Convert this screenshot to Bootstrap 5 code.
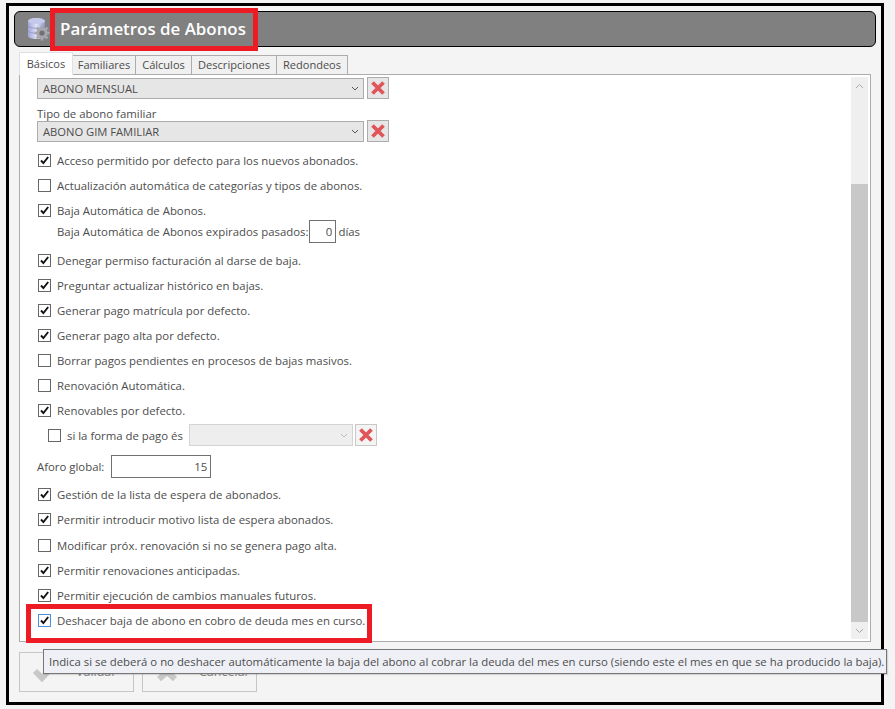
<!DOCTYPE html>
<html lang="es">
<head>
<meta charset="utf-8">
<title>Parámetros de Abonos</title>
<link href="https://cdn.jsdelivr.net/npm/bootstrap@5.3.0/dist/css/bootstrap.min.css" rel="stylesheet">
<style>
html,body{height:100%;overflow:hidden}
body{background:#f4f4f4;color:#4d4d4d;font-family:"Open Sans","Noto Sans",sans-serif;font-size:11.38px;line-height:15px}
.frame{position:relative;margin:3px 11px 0 6px;width:878px;height:702px;border:3px solid #000;padding:5px 5px 0 5px;background:#f4f4f4}
.head-bar{height:36px;width:862px;background:#808080;border:1px solid #000;border-radius:6px;padding-left:12px;gap:10px}
.head-title{color:#fff;font-size:16.9px;font-weight:600;line-height:34px}
.mark-box{position:absolute;border:5px solid #ed1c24;pointer-events:none}
.mark-head{left:41px;top:2px;width:208px;height:43px}
.mark-row{left:17px;top:598px;width:346px;height:39px}
.tab-strip{margin:5px 0 0 5px;height:22px;border:0;align-items:flex-end;position:relative;z-index:1;flex-wrap:nowrap}
.tab-strip .nav-link{height:20px;padding:0;margin:0 0 -1px 0;border:1px solid #acacac;border-left-width:0;border-radius:0;background:#f0f0f0;color:#4d4d4d;text-align:center;line-height:18px;font-size:11.05px}
.tab-strip .nav-link.active{height:23px;background:#fff;border-left-width:1px;border-bottom-color:#fff;line-height:22px;padding-bottom:0;color:#4d4d4d}
.tw1{width:54px}.tw2{width:63px}.tw3{width:56px}.tw4{width:85px}.tw5{width:71px}
.tab-body{margin-left:5px;width:852px;height:568px;border:1px solid #acacac;background:#fff;padding:2px 2px 2px 0;overflow:hidden}
.scroll-pane{overflow:hidden;padding-left:17px;min-width:0}
.clip-label{margin-top:-15px;height:15px;white-space:nowrap}
.combo{width:327px;height:21px;min-height:0;padding:0 20px 0 5px;border:1px solid #acacac;border-radius:0;background-color:#e6e6e6;color:#4d4d4d;font-size:11.2px;line-height:19px;background-position:right 4px center;background-size:8px 5px;background-image:url("data:image/svg+xml,%3Csvg xmlns='http://www.w3.org/2000/svg' viewBox='0 0 8 5'%3E%3Cpath d='M1 1l3 3 3-3' fill='none' stroke='%23555' stroke-width='1'/%3E%3C/svg%3E")}
.combo:disabled{background-color:#eee;border-color:#d4d4d4;width:164px;height:22px;background-image:url("data:image/svg+xml,%3Csvg xmlns='http://www.w3.org/2000/svg' viewBox='0 0 8 5'%3E%3Cpath d='M1 1l3 3 3-3' fill='none' stroke='%23bbb' stroke-width='1'/%3E%3C/svg%3E")}
.del-btn{width:22px;height:22px;padding:0;border:1px solid #acacac;border-radius:0;background:#e6e6e6;line-height:0}
.del-off{background:#f4f4f4;border-color:#c8c8c8;margin-left:-2px}
.pick-pair{gap:3px}
.label-gap{height:21px;line-height:13px}
.opt-line{height:25px;gap:6px;white-space:nowrap}
.opt-line .form-check-input,.sub-pick .form-check-input{width:13px;height:13px;margin:0 0 0 1px;flex:none;border:1px solid #666;border-radius:0;background-color:#fff;box-shadow:none}
.opt-line .form-check-input:checked,.sub-pick .form-check-input:checked{background-color:#fff;border-color:#666;background-size:11px 11px;background-image:url("data:image/svg+xml,%3Csvg xmlns='http://www.w3.org/2000/svg' viewBox='0 0 11 11'%3E%3Cpath d='M2 5.5l2.4 2.6L9.2 2' fill='none' stroke='%23111' stroke-width='1.9'/%3E%3C/svg%3E")}
.opt-line .form-check-input.is-focus{border-color:#4a90e2}
.gap-a{margin-top:6px}
.gap-b{margin-top:1px}
.sub-line{height:23px;padding-left:20px;white-space:nowrap;margin-top:-3px;margin-bottom:5px}
.sub-line .num-box{margin-left:1px}
.num-box{width:27px;height:23px;padding:0 3px;border:1px solid #707070;border-radius:0;text-align:right;font-size:11.5px;color:#4d4d4d;line-height:21px;background:#fff}
.unit-txt{margin-left:2px}
.sub-pick{height:22px;padding-left:10px;white-space:nowrap;margin-top:1px}
.sub-pick .combo{margin-left:2px}
.pick-txt{margin-left:2px}
.aforo{height:23px;margin-top:9px;margin-bottom:4px;white-space:nowrap;gap:7px}
.num-wide{width:100px}
.side-bar{width:17px;flex:none;background:#efefef}
.side-arrow{height:17px;flex:none}
.side-thumb{height:438px;background:#c8c8c8;margin-top:90px}
.foot-row{margin:10px 0 0 5px;gap:8px}
.act-btn{width:115px;height:40px;border:1px solid #c6c6c6;border-radius:0;background:#f4f4f4;color:#888;font-size:12.5px;padding:0 0 0 12px;gap:20px;opacity:1}
.tip-box{position:absolute;left:34px;top:643px;width:844px;height:25px;background:#eff0f6;border:1px solid #767676;padding:0 5px;line-height:23px;color:#4d4d4d;font-size:11.38px;white-space:nowrap;box-shadow:1px 1px 1px rgba(0,0,0,.12)}
</style>
</head>
<body>
<div class="frame">
  <div class="head-bar d-flex align-items-center">
    <svg width="23" height="24" viewBox="0 0 23 24" aria-hidden="true">
      <defs><linearGradient id="dbg" x1="0" x2="1"><stop offset="0" stop-color="#9fa6d8"/><stop offset=".5" stop-color="#dfe2f5"/><stop offset="1" stop-color="#8f96c8"/></linearGradient></defs>
      <path d="M1 4c0-4 17-4 17 0v15c0 4-17 4-17 0z" fill="url(#dbg)"/>
      <ellipse cx="9.5" cy="4" rx="8.5" ry="3" fill="#c4c8ea"/>
      <path d="M1 9c2 3 15 3 17 0M1 14c2 3 15 3 17 0" fill="none" stroke="#8c92c4" stroke-width=".8"/>
      <g transform="translate(15 16)"><circle r="5.6" fill="#a6a6ac"/><g stroke="#a6a6ac" stroke-width="2.6"><path d="M0-7.6V7.6M-7.6 0H7.6M-5.4-5.4l10.8 10.8M-5.4 5.4L5.4-5.4"/></g><circle r="2.6" fill="#6f6f75"/></g>
    </svg>
    <span class="head-title">Parámetros de Abonos</span>
  </div>

  <ul class="nav nav-tabs tab-strip d-flex">
    <li class="nav-item"><a class="nav-link active tw1" href="#">Básicos</a></li>
    <li class="nav-item"><a class="nav-link tw2" href="#">Familiares</a></li>
    <li class="nav-item"><a class="nav-link tw3" href="#">Cálculos</a></li>
    <li class="nav-item"><a class="nav-link tw4" href="#">Descripciones</a></li>
    <li class="nav-item"><a class="nav-link tw5" href="#">Redondeos</a></li>
  </ul>

  <div class="tab-body d-flex">
    <div class="scroll-pane flex-grow-1">
      <div class="clip-label">Tipo de abono por defecto</div>
      <div class="pick-pair d-flex align-items-center">
        <select class="form-select combo"><option>ABONO MENSUAL</option></select>
        <button class="btn del-btn" type="button" aria-label="Quitar"><svg width="16" height="16" viewBox="0 0 16 16"><path d="M2.5 2.5l11 11M13.5 2.5l-11 11" stroke="#e0555a" stroke-width="3.8"/></svg></button>
      </div>
      <div class="label-gap d-flex align-items-end">Tipo de abono familiar</div>
      <div class="pick-pair d-flex align-items-center">
        <select class="form-select combo"><option>ABONO GIM FAMILIAR</option></select>
        <button class="btn del-btn" type="button" aria-label="Quitar"><svg width="16" height="16" viewBox="0 0 16 16"><path d="M2.5 2.5l11 11M13.5 2.5l-11 11" stroke="#e0555a" stroke-width="3.8"/></svg></button>
      </div>
      <div class="gap-a"></div>
      <label class="opt-line d-flex align-items-center"><input class="form-check-input" type="checkbox" checked>Acceso permitido por defecto para los nuevos abonados.</label>
      <label class="opt-line d-flex align-items-center"><input class="form-check-input" type="checkbox">Actualización automática de categorías y tipos de abonos.</label>
      <label class="opt-line d-flex align-items-center"><input class="form-check-input" type="checkbox" checked>Baja Automática de Abonos.</label>
      <div class="sub-line d-flex align-items-center">Baja Automática de Abonos expirados pasados:<input class="form-control num-box" value="0"><span class="unit-txt">días</span></div>
      <label class="opt-line d-flex align-items-center"><input class="form-check-input" type="checkbox" checked>Denegar permiso facturación al darse de baja.</label>
      <label class="opt-line d-flex align-items-center"><input class="form-check-input" type="checkbox" checked>Preguntar actualizar histórico en bajas.</label>
      <label class="opt-line d-flex align-items-center"><input class="form-check-input" type="checkbox" checked>Generar pago matrícula por defecto.</label>
      <label class="opt-line d-flex align-items-center"><input class="form-check-input" type="checkbox" checked>Generar pago alta por defecto.</label>
      <label class="opt-line d-flex align-items-center"><input class="form-check-input" type="checkbox">Borrar pagos pendientes en procesos de bajas masivos.</label>
      <label class="opt-line d-flex align-items-center"><input class="form-check-input" type="checkbox">Renovación Automática.</label>
      <label class="opt-line d-flex align-items-center"><input class="form-check-input" type="checkbox" checked>Renovables por defecto.</label>
      <div class="sub-pick d-flex align-items-center gap-1">
        <input class="form-check-input" type="checkbox"><span class="pick-txt">si la forma de pago és</span>
        <select class="form-select combo" disabled><option></option></select>
        <button class="btn del-btn del-off" type="button" aria-label="Quitar"><svg width="16" height="16" viewBox="0 0 16 16"><path d="M2.5 2.5l11 11M13.5 2.5l-11 11" stroke="#e0555a" stroke-width="3.8"/></svg></button>
      </div>
      <div class="aforo d-flex align-items-center">Aforo global:<input class="form-control num-box num-wide" value="15"></div>
      <label class="opt-line d-flex align-items-center"><input class="form-check-input" type="checkbox" checked>Gestión de la lista de espera de abonados.</label>
      <label class="opt-line d-flex align-items-center"><input class="form-check-input" type="checkbox" checked>Permitir introducir motivo lista de espera abonados.</label>
      <label class="opt-line d-flex align-items-center gap-b"><input class="form-check-input" type="checkbox">Modificar próx. renovación si no se genera pago alta.</label>
      <label class="opt-line d-flex align-items-center"><input class="form-check-input" type="checkbox" checked>Permitir renovaciones anticipadas.</label>
      <label class="opt-line d-flex align-items-center"><input class="form-check-input" type="checkbox" checked>Permitir ejecución de cambios manuales futuros.</label>
      <label class="opt-line d-flex align-items-center"><input class="form-check-input is-focus" type="checkbox" checked>Deshacer baja de abono en cobro de deuda mes en curso.</label>
    </div>
    <div class="side-bar d-flex flex-column">
      <div class="side-arrow d-flex align-items-center justify-content-center"><svg width="9" height="6" viewBox="0 0 9 6"><path d="M1 5l3.5-3.5L8 5" fill="none" stroke="#aaa"/></svg></div>
      <div class="side-thumb"></div>
      <div class="side-arrow d-flex align-items-center justify-content-center"><svg width="9" height="6" viewBox="0 0 9 6"><path d="M1 1l3.5 3.5L8 1" fill="none" stroke="#aaa"/></svg></div>
    </div>
  </div>

  <div class="foot-row d-flex">
    <button class="btn act-btn d-flex align-items-center" type="button"><svg width="24" height="20" viewBox="0 0 24 20"><path d="M3 9l7 7L22 3" fill="none" stroke="#c8c8c8" stroke-width="6"/></svg>Validar</button>
    <button class="btn act-btn d-flex align-items-center" type="button"><svg width="24" height="20" viewBox="0 0 24 20"><path d="M4 3l16 14M20 3L4 17" fill="none" stroke="#c8c8c8" stroke-width="6"/></svg>Cancelar</button>
  </div>

  <div class="mark-box mark-head"></div>
  <div class="mark-box mark-row"></div>
  <div class="tip-box">Indica si se deberá o no deshacer automáticamente la baja del abono al cobrar la deuda del mes en curso (siendo este el mes en que se ha producido la baja).</div>
</div>
<script src="https://cdn.jsdelivr.net/npm/bootstrap@5.3.0/dist/js/bootstrap.bundle.min.js"></script>
</body>
</html>
